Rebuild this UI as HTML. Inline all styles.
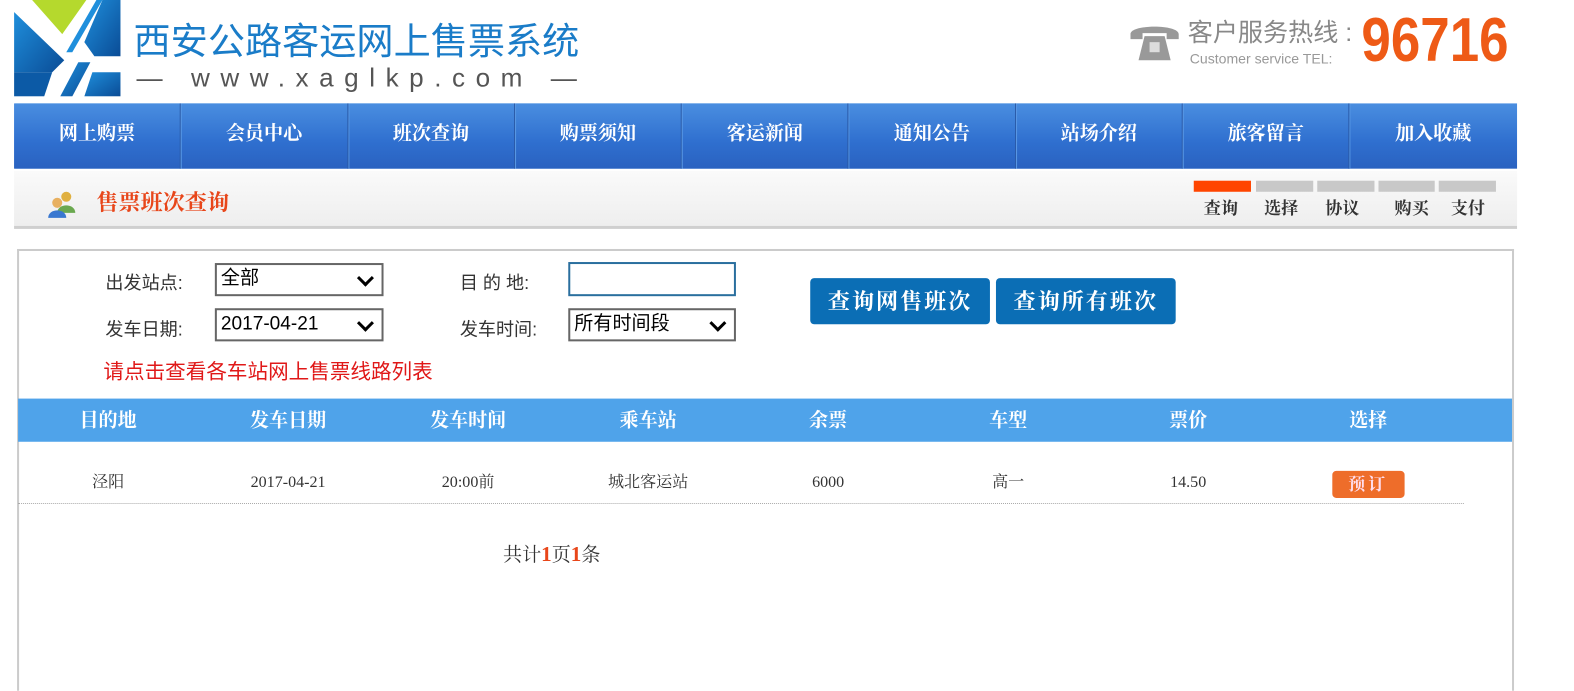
<!DOCTYPE html>
<html><head><meta charset="utf-8"><style>
*{margin:0;padding:0;box-sizing:border-box}
body{width:1574px;height:681px;background:#fff;font-family:"Liberation Serif","Noto Serif CJK SC",serif;overflow:hidden}
#w{position:relative;width:1574px;height:681px;transform:scale(1.004);transform-origin:0 0}
.abs{position:absolute}
.nav{left:14px;top:103px;width:1497px;height:65px;background:linear-gradient(#4a8ee0,#2f6fcf 60%,#2a62c0);display:flex}
.nav div{width:166.3px;text-align:center;color:#fff;font-size:19px;font-weight:bold;line-height:62px;border-right:1px solid #2a5aa8;box-shadow:1px 0 0 #5a9ae6}
.nav div:last-child{border:none;box-shadow:none}
.sub{left:14px;top:170px;width:1497px;height:58px;background:linear-gradient(#fafafa,#eeeeee);border-bottom:3px solid #cfcfcf}
.sans{font-family:"Liberation Sans","Noto Sans CJK SC",sans-serif}
.panel{left:17px;top:248px;width:1491px;height:440px;border:2px solid #cbcbcb;border-bottom:none}
.lbl{font-size:18px;color:#333}
.sel{border:2px solid #666;background:#fff;height:33px;font-family:"Liberation Sans","Noto Sans CJK SC",sans-serif;font-size:19px;color:#000;padding-left:4px;line-height:28px}
.sel:after{content:"";position:absolute;right:10px;top:7px;width:9px;height:9px;border-right:3px solid #000;border-bottom:3px solid #000;transform:rotate(45deg)}
.btn{background:#0b6eb5;color:#fff;font-size:22px;font-weight:bold;border-radius:4px;height:46px;line-height:46px;text-align:center;letter-spacing:2px;top:277px;font-family:"Noto Serif CJK SC",serif}
.th{left:18px;top:397px;width:1488px;height:43px;background:#4fa3ea;display:flex}
.th div,.tr div{width:179.3px;text-align:center}
.th div{color:#fff;font-size:19px;font-weight:bold;line-height:45px}
.tr{left:18px;top:469px;width:1440px;display:flex;font-size:16px;color:#333;line-height:24px}
.st{top:197px;font-size:17px;font-weight:bold;color:#333;line-height:22px}
</style></head><body><div id="w">
<svg class="abs" style="left:14px;top:0" width="108" height="96" viewBox="0 0 108 96">
<defs><linearGradient id="g" x1="0" y1="0" x2="1" y2="1"><stop offset="0" stop-color="#1f8fdc"/><stop offset="1" stop-color="#0a4c96"/></linearGradient></defs>
<polygon points="0,12 50,60 38,72 0,72" fill="url(#g)"/>
<polygon points="18,0 72,0 48,34" fill="#b5d92d"/>
<polygon points="0,72 38,72 30,96 0,96" fill="#0c5aa6"/>
<polygon points="46,96 64,62 76,62 58,96" fill="url(#g)"/>
<polygon points="70,42 88,0 106,0 106,56 80,56" fill="url(#g)"/>
<polygon points="78,72 106,72 106,96 70,96" fill="url(#g)"/>
<polygon points="52,52 82,0 88,0 58,52" fill="#1f8fdc"/>
</svg>
<div class="abs sans" style="left:133px;top:19px;font-size:37px;color:#1a7cc8;line-height:46px">西安公路客运网上售票系统</div>
<div class="abs sans" style="left:136px;top:61px;font-size:26px;color:#555;letter-spacing:10.5px;line-height:32px">— www.xaglkp.com —</div>
<svg class="abs" style="left:1124px;top:20px" width="52" height="42" viewBox="0 0 52 42"><path d="M2 14 C2 4 50 4 50 14 L50 19 L38 19 L38 13 L14 13 L14 19 L2 19Z" fill="#999"/><path d="M16 16 L36 16 L42 40 L10 40Z" fill="#999"/><rect x="21" y="22" width="10" height="10" fill="#ddd"/></svg>
<div class="abs sans" style="left:1183px;top:17px;font-size:25px;color:#888;line-height:32px">客户服务热线 :</div>
<div class="abs sans" style="left:1185px;top:50px;font-size:14px;color:#999;line-height:16px">Customer service TEL:</div>
<div class="abs sans" style="left:1356px;top:8px;font-size:62px;font-weight:bold;color:#ee5a16;line-height:66px;transform:scaleX(0.85);transform-origin:left">96716</div>
<div class="abs nav"><div>网上购票</div><div>会员中心</div><div>班次查询</div><div>购票须知</div><div>客运新闻</div><div>通知公告</div><div>站场介绍</div><div>旅客留言</div><div>加入收藏</div></div>
<div class="abs sub"></div>
<svg class="abs" style="left:46px;top:188px" width="32" height="30" viewBox="0 0 32 30"><circle cx="20" cy="8" r="5" fill="#e0b040"/><path d="M11 24 C11 14 29 14 29 24Z" fill="#6aa84f"/><circle cx="11" cy="14" r="5" fill="#e8b060"/><path d="M2 29 C2 19 20 19 20 29Z" fill="#3a78d0"/></svg>
<div class="abs" style="left:96px;top:187px;font-size:22px;font-weight:bold;color:#e8461a;line-height:30px">售票班次查询</div>
<div class="abs" style="left:1189px;top:180px;width:57px;height:11px;background:#ff4500"></div>
<div class="abs" style="left:1251px;top:180px;width:57px;height:11px;background:#c8c8c8"></div>
<div class="abs" style="left:1312px;top:180px;width:57px;height:11px;background:#c8c8c8"></div>
<div class="abs" style="left:1373px;top:180px;width:56px;height:11px;background:#c8c8c8"></div>
<div class="abs" style="left:1433px;top:180px;width:57px;height:11px;background:#c8c8c8"></div>
<div class="abs st" style="left:1199px">查询</div>
<div class="abs st" style="left:1259px">选择</div>
<div class="abs st" style="left:1320px">协议</div>
<div class="abs st" style="left:1389px">购买</div>
<div class="abs st" style="left:1445px">支付</div>
<div class="abs panel"></div>
<div class="abs lbl sans" style="left:105px;top:268px">出发站点:</div>
<div class="abs sel" style="left:214px;top:262px;width:168px">全部</div>
<div class="abs lbl sans" style="left:458px;top:268px">目 的 地:</div>
<div class="abs" style="left:566px;top:261px;width:167px;height:34px;border:2px solid #2a6f9e;background:#fff"></div>
<div class="abs lbl sans" style="left:105px;top:314px">发车日期:</div>
<div class="abs sel" style="left:214px;top:307px;width:168px">2017-04-21</div>
<div class="abs lbl sans" style="left:458px;top:314px">发车时间:</div>
<div class="abs sel" style="left:566px;top:307px;width:167px">所有时间段</div>
<div class="abs sans" style="left:103px;top:357px;font-size:20.5px;color:#e01818;line-height:28px">请点击查看各车站网上售票线路列表</div>
<div class="abs btn" style="left:807px;width:179px">查询网售班次</div>
<div class="abs btn" style="left:992px;width:179px">查询所有班次</div>
<div class="abs th"><div>目的地</div><div>发车日期</div><div>发车时间</div><div>乘车站</div><div>余票</div><div>车型</div><div>票价</div><div>选择</div></div>
<div class="abs tr"><div>泾阳</div><div>2017-04-21</div><div>20:00前</div><div>城北客运站</div><div>6000</div><div>高一</div><div>14.50</div><div><span style="display:inline-block;width:72px;height:27px;background:#ee6d2a;border-radius:4px;color:#fde;font-size:17px;font-weight:bold;line-height:27px;letter-spacing:3px">预订</span></div></div>
<div class="abs" style="left:18px;top:501px;width:1440px;border-top:1px dotted #aaa"></div>
<div class="abs" style="left:501px;top:539px;font-size:19px;color:#333;line-height:26px">共计<b style="color:#e8461a;font-size:21px">1</b>页<b style="color:#e8461a;font-size:21px">1</b>条</div>
</div></body></html>
